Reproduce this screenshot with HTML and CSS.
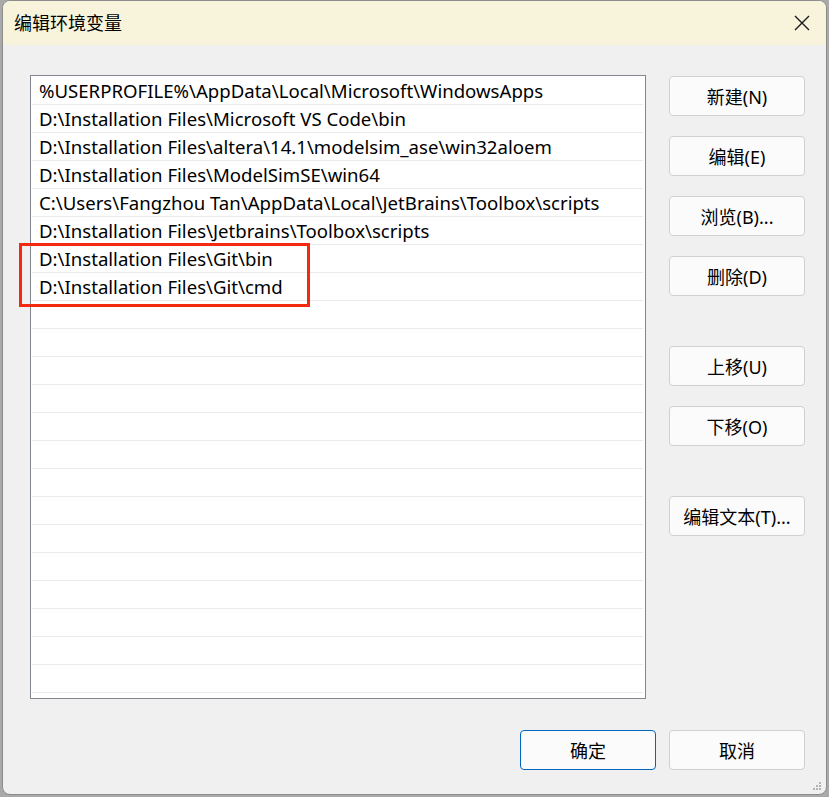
FILE: index.html
```html
<!DOCTYPE html>
<html lang="zh-CN">
<head>
  <meta charset="UTF-8" />
  <title>编辑环境变量</title>
  <link rel="stylesheet" href="styles.css">
</head>
<body>
  <div class="dialog">
    <div class="titlebar">
      <span class="title">编辑环境变量</span>
      <span class="close">
        <svg width="16" height="16" viewBox="0 0 16 16"><path d="M1 1 L15 15 M15 1 L1 15" stroke="#1a1a1a" stroke-width="1.4" fill="none"/></svg>
      </span>
    </div>
    <div class="content">
      <div class="listbox">
        <div class="row">%USERPROFILE%\AppData\Local\Microsoft\WindowsApps</div>
        <div class="row">D:\Installation Files\Microsoft VS Code\bin</div>
        <div class="row">D:\Installation Files\altera\14.1\modelsim_ase\win32aloem</div>
        <div class="row">D:\Installation Files\ModelSimSE\win64</div>
        <div class="row">C:\Users\Fangzhou Tan\AppData\Local\JetBrains\Toolbox\scripts</div>
        <div class="row">D:\Installation Files\Jetbrains\Toolbox\scripts</div>
        <div class="row">D:\Installation Files\Git\bin</div>
        <div class="row">D:\Installation Files\Git\cmd</div>
        <div class="row"></div>
        <div class="row"></div>
        <div class="row"></div>
        <div class="row"></div>
        <div class="row"></div>
        <div class="row"></div>
        <div class="row"></div>
        <div class="row"></div>
        <div class="row"></div>
        <div class="row"></div>
        <div class="row"></div>
        <div class="row"></div>
        <div class="row"></div>
        <div class="row"></div>
        <div class="row"></div>
      </div>
      <div class="side">
        <button class="btn">新建(N)</button>
        <button class="btn">编辑(E)</button>
        <button class="btn">浏览(B)...</button>
        <button class="btn">删除(D)</button>
        <button class="btn group">上移(U)</button>
        <button class="btn">下移(O)</button>
        <button class="btn group">编辑文本(T)...</button>
      </div>
    </div>
    <div class="footer">
      <button class="btn btn-default">确定</button>
      <button class="btn">取消</button>
    </div>
    <div class="mark"></div>
    <svg class="grip" width="10" height="10" viewBox="0 0 10 10" fill="#b4b4b4">
      <rect x="7" y="1" width="2" height="2"/>
      <rect x="4" y="4" width="2" height="2"/><rect x="7" y="4" width="2" height="2"/>
      <rect x="1" y="7" width="2" height="2"/><rect x="4" y="7" width="2" height="2"/><rect x="7" y="7" width="2" height="2"/>
    </svg>
  </div>
</body>
</html>
```

FILE: styles.css
```css
* { margin: 0; padding: 0; box-sizing: border-box; }
body {
  font-family: "Noto Sans", "Noto Sans CJK SC", sans-serif;
  background: #a9a9a9;
  width: 829px;
  height: 797px;
  overflow: hidden;
}
.dialog {
  position: relative;
  margin-left: 2px;
  width: 825px;
  height: 795px;
  background: #f0f0f0;
  border: 1px solid #8c8c8c;
  border-radius: 8px;
  overflow: hidden;
  color: #000;
}
.titlebar {
  height: 44px;
  background: #f8f4dc;
  display: flex;
  align-items: center;
  justify-content: space-between;
  padding: 0 16px 0 11px;
}
.title { font-size: 18px; margin-top: -2px; }
.close { display: flex; }
.content {
  display: flex;
  gap: 23px;
  padding: 30px 0 0 27px;
}
.listbox {
  width: 616px;
  height: 624px;
  background: #fff;
  border: 1px solid #82878f;
  padding: 1px 2px 0 1px;
  overflow: hidden;
}
.row {
  height: 28px;
  border-bottom: 1px solid #ebebeb;
  padding-left: 7px;
  font-size: 18.6px;
  line-height: 28px;
  white-space: nowrap;
}
.side {
  display: flex;
  flex-direction: column;
  gap: 20px;
  padding-top: 1px;
}
.btn {
  width: 136px;
  height: 40px;
  background: #fbfbfb;
  border: 1px solid #d0d0d0;
  border-radius: 4px;
  font-family: inherit;
  font-size: 18px;
  color: #000;
}
.side .group { margin-top: 30px; }
.footer {
  display: flex;
  justify-content: flex-end;
  gap: 13px;
  padding: 31px 21px 0 0;
}
.btn-default { border-color: #0067c0; }
.mark {
  position: absolute;
  left: 16px;
  top: 242px;
  width: 291px;
  height: 64px;
  border: 3px solid #f42a10;
}
.grip {
  position: absolute;
  right: 4px;
  bottom: 3px;
}
```
